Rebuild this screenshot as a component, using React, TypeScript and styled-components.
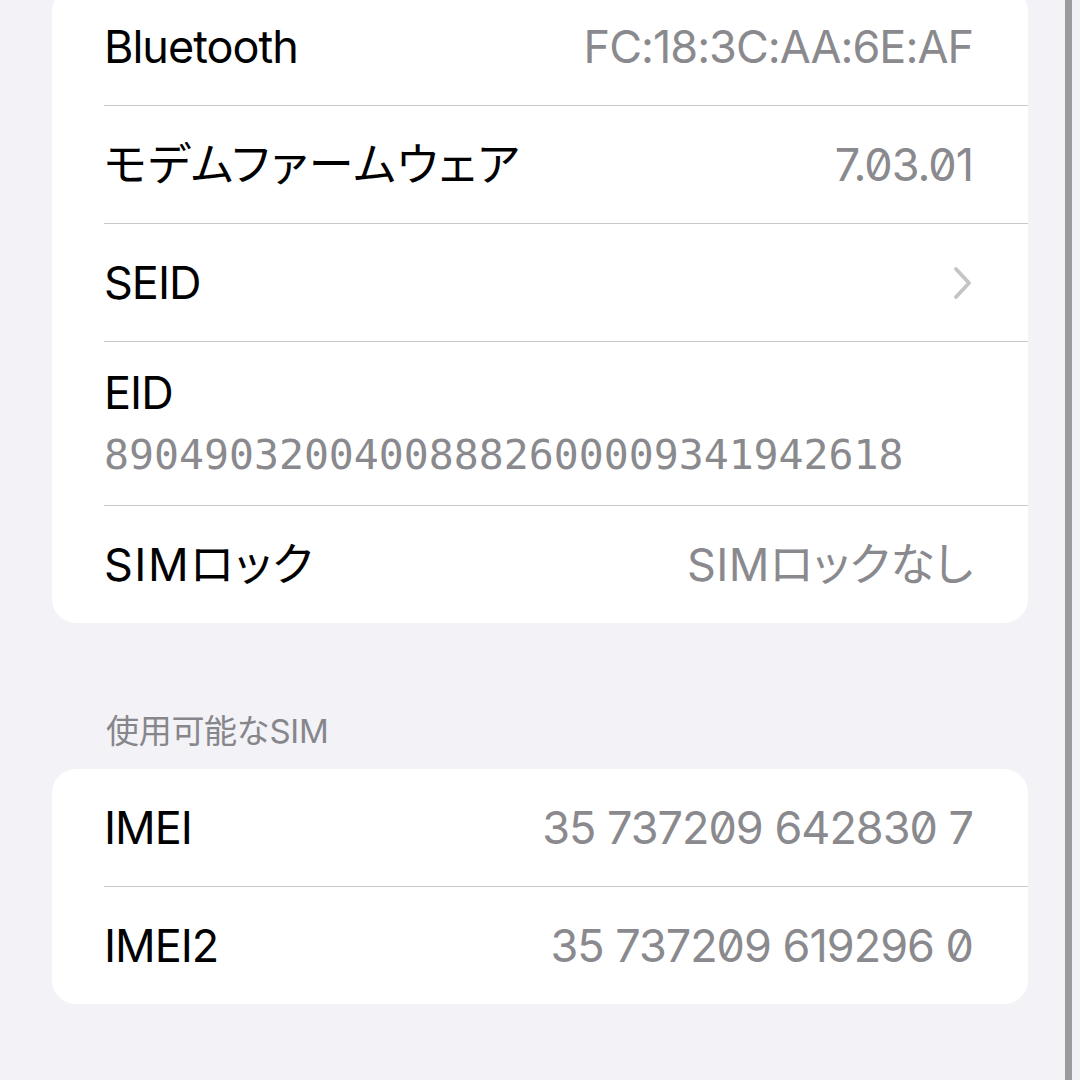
import React from "react";
import styled, { createGlobalStyle } from "styled-components";

const GlobalStyle = createGlobalStyle`
  html, body {
    margin: 0;
    padding: 0;
    background: #f2f2f7;
  }
  body {
    font-family: Inter, "Noto Sans CJK JP", sans-serif;
    -webkit-font-smoothing: antialiased;
  }
`;

interface InfoRow {
  label: string;
  value?: string;
  mono?: boolean;
  stacked?: boolean;
  chevron?: boolean;
  ja?: boolean;
  jaValue?: boolean;
}

const aboutRows: InfoRow[] = [
  { label: "Bluetooth", value: "FC:18:3C:AA:6E:AF" },
  { label: "モデムファームウェア", value: "7.03.01", ja: true },
  { label: "SEID", chevron: true },
  { label: "EID", value: "89049032004008882600009341942618", stacked: true, mono: true },
  { label: "SIMロック", value: "SIMロックなし", ja: true, jaValue: true },
];

const simRows: InfoRow[] = [
  { label: "IMEI", value: "35 737209 642830 7" },
  { label: "IMEI2", value: "35 737209 619296 0" },
];

export default function App() {
  return (
    <>
      <GlobalStyle />
      <Screen>
        <Content>
          <Card $first>
            {aboutRows.map((row, i) => (
              <Row key={row.label}>
                <RowInner $last={i === aboutRows.length - 1} $stacked={row.stacked}>
                  <Label $ja={row.ja}>{row.label}</Label>
                  {row.value && (
                    <Value $mono={row.mono} $ja={row.jaValue}>
                      {row.value}
                    </Value>
                  )}
                  {row.chevron && (
                    <Chevron viewBox="0 0 20 34" aria-hidden>
                      <path d="M3 3 L16 17 L3 31" />
                    </Chevron>
                  )}
                </RowInner>
              </Row>
            ))}
          </Card>

          <SectionHeader>使用可能なSIM</SectionHeader>

          <Card>
            {simRows.map((row, i) => (
              <Row key={row.label}>
                <RowInner $last={i === simRows.length - 1}>
                  <Label>{row.label}</Label>
                  <Value>{row.value}</Value>
                </RowInner>
              </Row>
            ))}
          </Card>
        </Content>
        <EdgeBar />
        <EdgeStrip />
      </Screen>
    </>
  );
}

const Screen = styled.div`
  display: flex;
  width: 1080px;
  height: 1080px;
  overflow: hidden;
  background: #f2f2f7;
`;

const Content = styled.div`
  flex: 1;
  display: flex;
  flex-direction: column;
  padding: 0 37px 0 52px;
`;

const Card = styled.div<{ $first?: boolean }>`
  background: #ffffff;
  border-radius: 24px;
  margin-top: ${(p) => (p.$first ? "-12px" : "0")};
  overflow: hidden;
`;

const Row = styled.div`
  padding-left: 52px;
`;

const RowInner = styled.div<{ $last?: boolean; $stacked?: boolean }>`
  display: flex;
  flex-direction: ${(p) => (p.$stacked ? "column" : "row")};
  align-items: ${(p) => (p.$stacked ? "flex-start" : "center")};
  justify-content: ${(p) => (p.$stacked ? "center" : "space-between")};
  gap: ${(p) => (p.$stacked ? "6px" : "0")};
  height: ${(p) => (p.$stacked ? "163px" : "117px")};
  padding-right: 55px;
  border-bottom: ${(p) => (p.$last ? "none" : "1px solid #c8c8cb")};
  box-sizing: content-box;
`;

const Label = styled.span<{ $ja?: boolean }>`
  font-size: 45px;
  line-height: 56px;
  color: #000000;
  letter-spacing: ${(p) => (p.$ja ? "1.5px" : "-1px")};
  font-feature-settings: "palt";
`;

const Value = styled.span<{ $mono?: boolean; $ja?: boolean }>`
  font-size: ${(p) => (p.$mono ? "41.5px" : "45px")};
  line-height: 56px;
  color: #8a8a8e;
  font-family: ${(p) =>
    p.$mono ? '"DejaVu Sans Mono", monospace' : 'Inter, "Noto Sans CJK JP", sans-serif'};
  font-feature-settings: "zero", "palt";
  letter-spacing: ${(p) => (p.$mono ? "0" : p.$ja ? "0.3px" : "-1px")};
`;

const Chevron = styled.svg`
  width: 20px;
  height: 34px;
  fill: none;
  stroke: #c4c4c7;
  stroke-width: 3.8;
  stroke-linecap: round;
  stroke-linejoin: round;
`;

const SectionHeader = styled.div`
  padding: 88px 0 18px 54px;
  font-size: 33px;
  line-height: 40px;
  color: #86868b;
  letter-spacing: -0.3px;
`;

const EdgeBar = styled.div`
  width: 7px;
  background: #9b9b9d;
`;

const EdgeStrip = styled.div`
  width: 8px;
  background: #f0f0f5;
`;
